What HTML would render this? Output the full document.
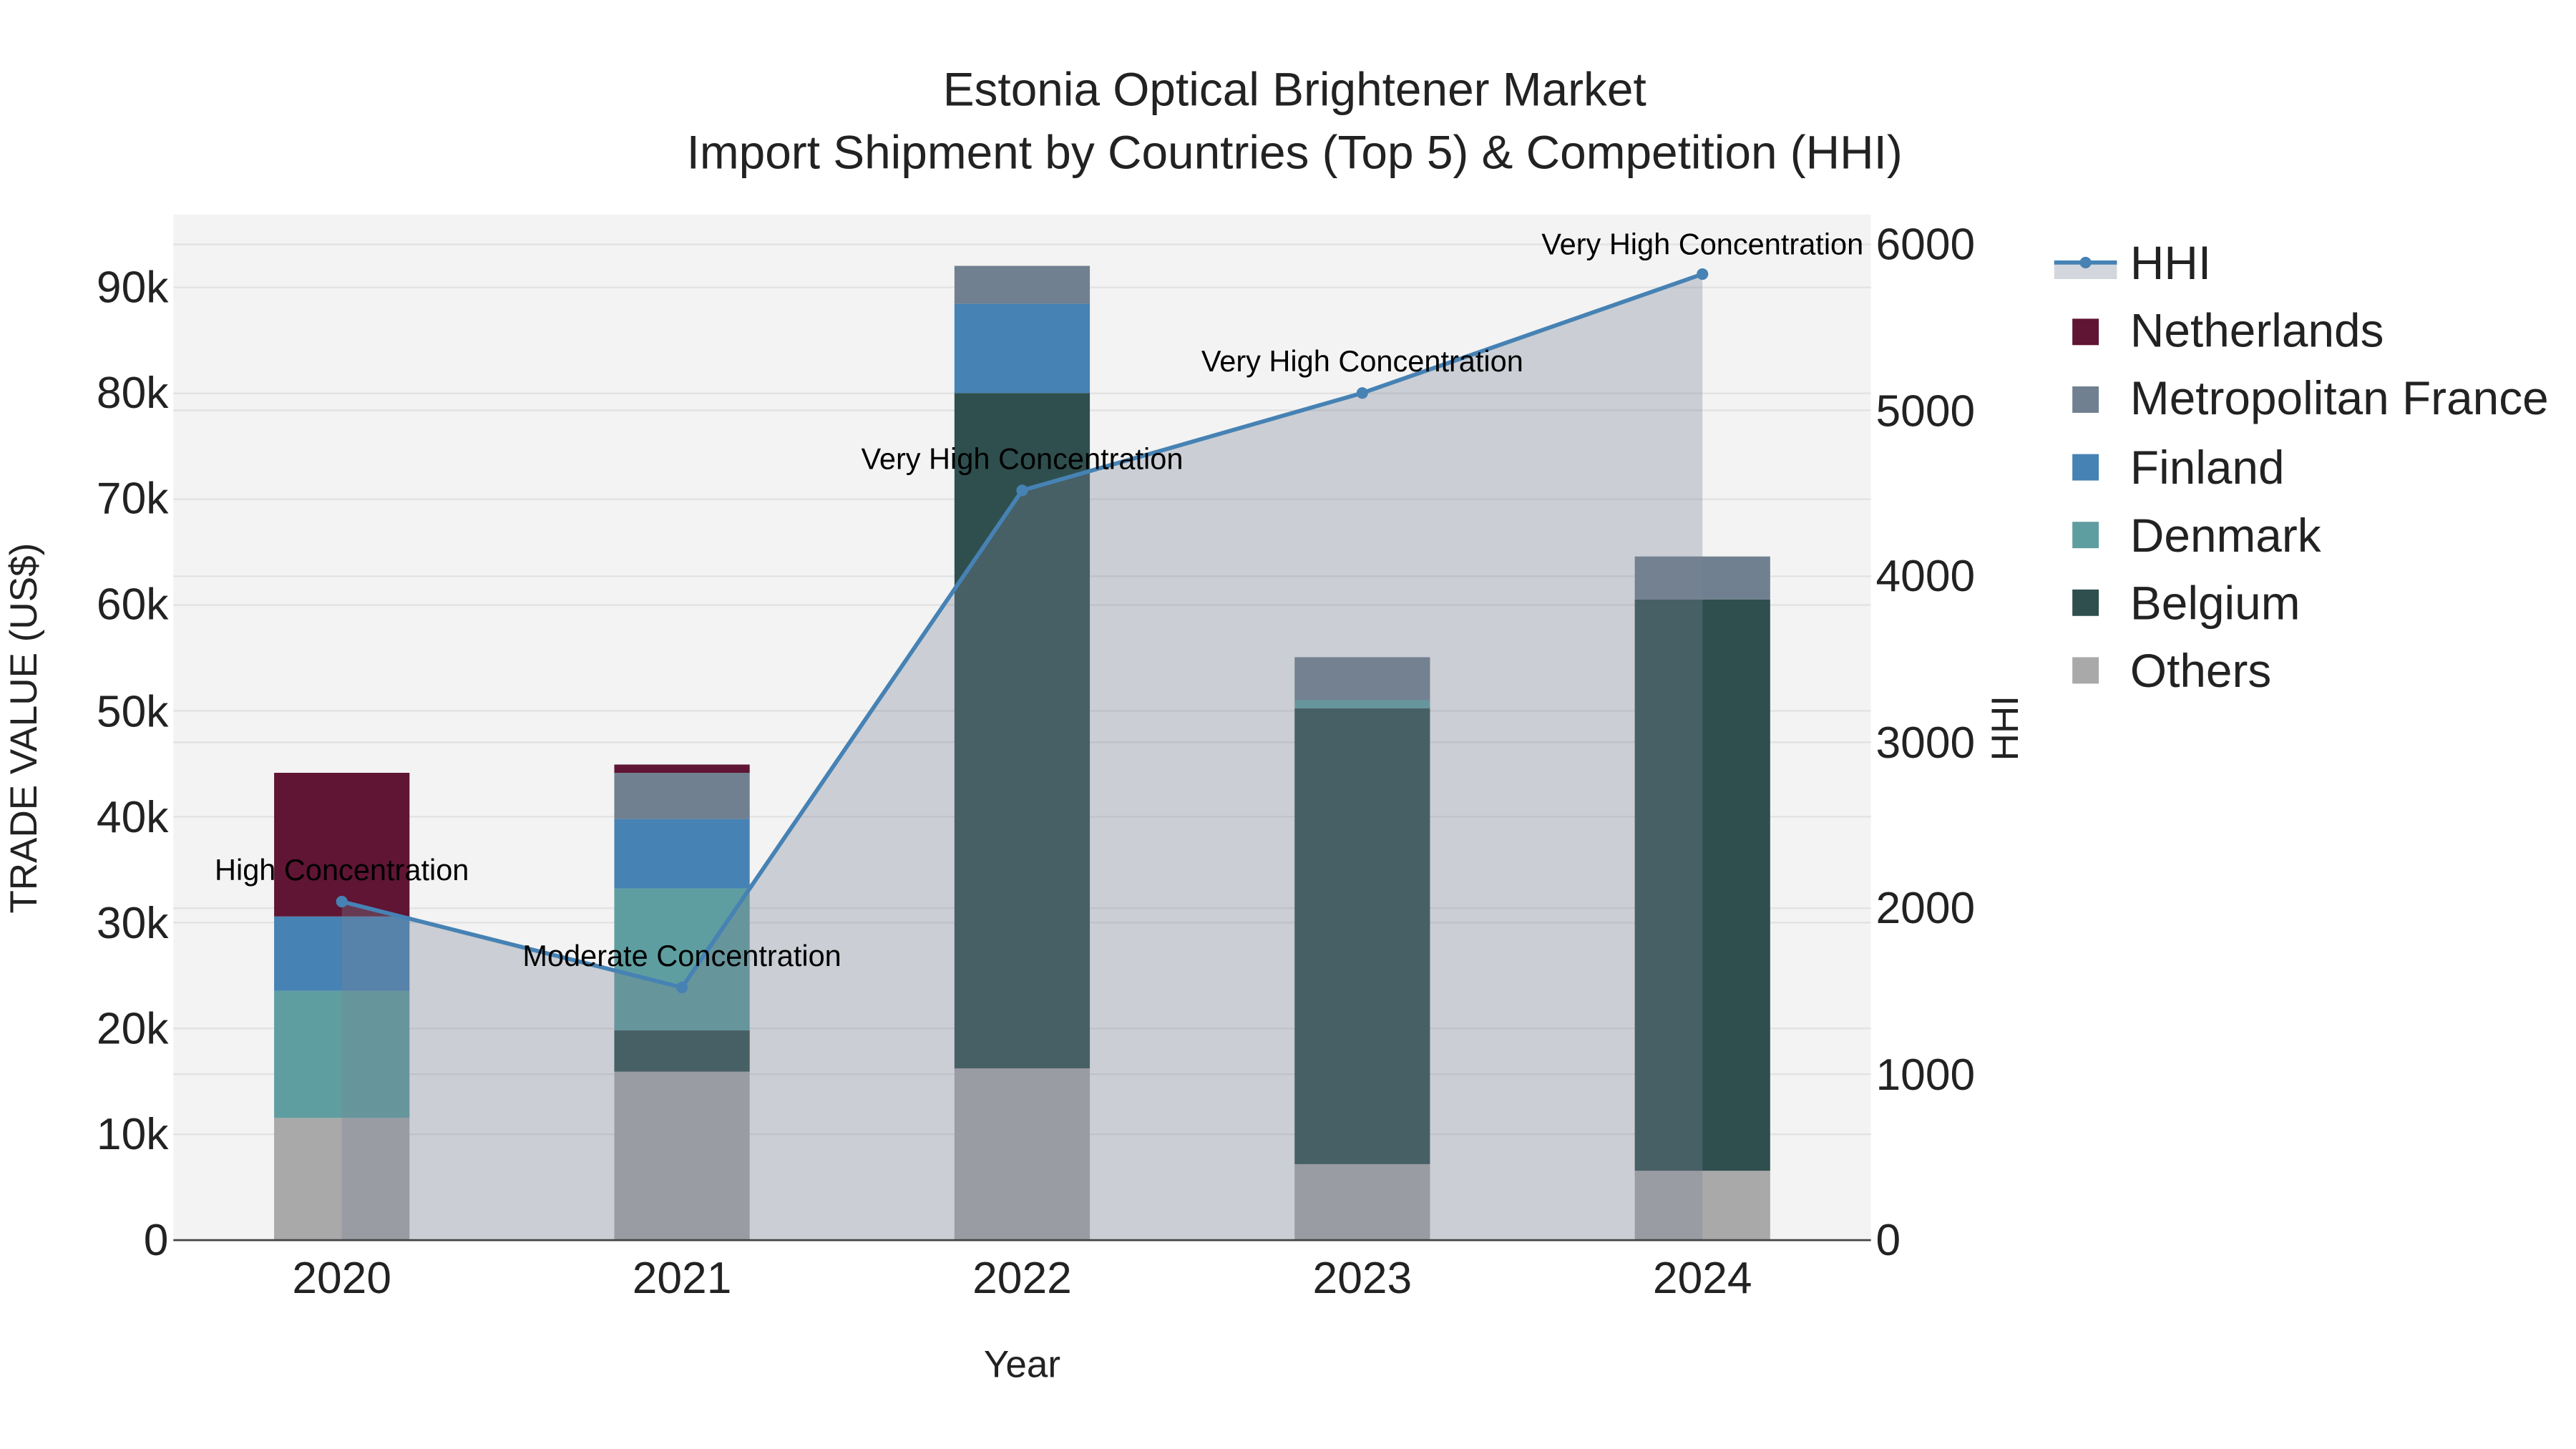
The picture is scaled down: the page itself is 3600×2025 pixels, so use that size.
<!DOCTYPE html>
<html><head><meta charset="utf-8"><style>html,body{margin:0;padding:0;background:#fff}svg{display:block}</style></head><body>
<svg width="3600" height="2025" viewBox="0 0 1560 877.5" xmlns="http://www.w3.org/2000/svg" font-family="Liberation Sans, sans-serif">
<rect width="1560" height="877.5" fill="#fff"/>
<rect x="105" y="130" width="1028" height="621" fill="#f3f3f3"/>
<g stroke="#e2e2e2" stroke-width="1">
<line x1="105" x2="1133" y1="686.9" y2="686.9"/><line x1="105" x2="1133" y1="622.8" y2="622.8"/><line x1="105" x2="1133" y1="558.7" y2="558.7"/><line x1="105" x2="1133" y1="494.6" y2="494.6"/><line x1="105" x2="1133" y1="430.5" y2="430.5"/><line x1="105" x2="1133" y1="366.4" y2="366.4"/><line x1="105" x2="1133" y1="302.3" y2="302.3"/><line x1="105" x2="1133" y1="238.2" y2="238.2"/><line x1="105" x2="1133" y1="174.1" y2="174.1"/>
<line x1="105" x2="1133" y1="650.5" y2="650.5"/><line x1="105" x2="1133" y1="550" y2="550"/><line x1="105" x2="1133" y1="449.5" y2="449.5"/><line x1="105" x2="1133" y1="349" y2="349"/><line x1="105" x2="1133" y1="248.5" y2="248.5"/><line x1="105" x2="1133" y1="148" y2="148"/>
</g>
<rect x="166" y="677" width="82" height="74" fill="#a9a9a9"/>
<rect x="166" y="600" width="82" height="77" fill="#5f9ea0"/>
<rect x="166" y="555" width="82" height="45" fill="#4682b4"/>
<rect x="166" y="468" width="82" height="87" fill="#5f1533"/>
<rect x="372" y="649" width="82" height="102" fill="#a9a9a9"/>
<rect x="372" y="624" width="82" height="25" fill="#2f4f4f"/>
<rect x="372" y="538" width="82" height="86" fill="#5f9ea0"/>
<rect x="372" y="496" width="82" height="42" fill="#4682b4"/>
<rect x="372" y="468" width="82" height="28" fill="#708090"/>
<rect x="372" y="463" width="82" height="5" fill="#5f1533"/>
<rect x="578" y="647" width="82" height="104" fill="#a9a9a9"/>
<rect x="578" y="238" width="82" height="409" fill="#2f4f4f"/>
<rect x="578" y="184" width="82" height="54" fill="#4682b4"/>
<rect x="578" y="161" width="82" height="23" fill="#708090"/>
<rect x="784" y="705" width="82" height="46" fill="#a9a9a9"/>
<rect x="784" y="429" width="82" height="276" fill="#2f4f4f"/>
<rect x="784" y="424" width="82" height="5" fill="#5f9ea0"/>
<rect x="784" y="398" width="82" height="26" fill="#708090"/>
<rect x="990" y="709" width="82" height="42" fill="#a9a9a9"/>
<rect x="990" y="363" width="82" height="346" fill="#2f4f4f"/>
<rect x="990" y="337" width="82" height="26" fill="#708090"/>
<polygon points="207,751 207,546 413,598 619,297 825,238 1031,166 1031,751" fill="rgba(120,130,150,0.33)"/>
<polyline points="207,546 413,598 619,297 825,238 1031,166" fill="none" stroke="#4682b4" stroke-width="2.5"/>
<g fill="#4682b4"><circle cx="207" cy="546" r="3.5"/><circle cx="413" cy="598" r="3.5"/><circle cx="619" cy="297" r="3.5"/><circle cx="825" cy="238" r="3.5"/><circle cx="1031" cy="166" r="3.5"/></g>
<line x1="105" x2="1133" y1="751" y2="751" stroke="#444" stroke-width="1.2"/>
<g font-size="18" text-anchor="middle" fill="#000">
<text x="207" y="533">High Concentration</text>
<text x="413" y="585">Moderate Concentration</text>
<text x="619" y="284">Very High Concentration</text>
<text x="825" y="225">Very High Concentration</text>
<text x="1031" y="154">Very High Concentration</text>
</g>
<g font-size="27" text-anchor="end" fill="#222">
<text x="102" y="760">0</text><text x="102" y="696">10k</text><text x="102" y="632">20k</text><text x="102" y="568">30k</text><text x="102" y="504">40k</text><text x="102" y="440">50k</text><text x="102" y="375">60k</text><text x="102" y="311">70k</text><text x="102" y="247">80k</text><text x="102" y="183">90k</text>
</g>
<g font-size="27" fill="#222">
<text x="1136" y="760">0</text><text x="1136" y="660">1000</text><text x="1136" y="559">2000</text><text x="1136" y="459">3000</text><text x="1136" y="358">4000</text><text x="1136" y="258">5000</text><text x="1136" y="157">6000</text>
</g>
<g font-size="27" text-anchor="middle" fill="#222">
<text x="207" y="783">2020</text><text x="413" y="783">2021</text><text x="619" y="783">2022</text><text x="825" y="783">2023</text><text x="1031" y="783">2024</text>
</g>
<text x="619" y="834" font-size="23" text-anchor="middle" fill="#222">Year</text>
<text transform="translate(22,441) rotate(-90)" font-size="23" text-anchor="middle" fill="#222">TRADE VALUE (US$)</text>
<text transform="translate(1222,441) rotate(-90)" font-size="23" text-anchor="middle" fill="#222">HHI</text>
<text x="784" y="64" font-size="28.5" text-anchor="middle" fill="#222">Estonia Optical Brightener Market</text>
<text x="784" y="102" font-size="28.5" text-anchor="middle" fill="#222">Import Shipment by Countries (Top 5) &amp; Competition (HHI)</text>
<rect x="1244" y="159" width="38" height="10" fill="rgba(120,130,150,0.33)"/>
<line x1="1244" x2="1282" y1="159" y2="159" stroke="#4682b4" stroke-width="2.5"/>
<circle cx="1263" cy="159" r="3.5" fill="#4682b4"/>
<rect x="1255" y="193" width="16" height="16" fill="#5f1533"/>
<rect x="1255" y="234" width="16" height="16" fill="#708090"/>
<rect x="1255" y="275" width="16" height="16" fill="#4682b4"/>
<rect x="1255" y="316" width="16" height="16" fill="#5f9ea0"/>
<rect x="1255" y="357" width="16" height="16" fill="#2f4f4f"/>
<rect x="1255" y="398" width="16" height="16" fill="#a9a9a9"/>
<g font-size="28.5" fill="#222">
<text x="1290" y="169">HHI</text>
<text x="1290" y="210">Netherlands</text>
<text x="1290" y="251">Metropolitan France</text>
<text x="1290" y="293">Finland</text>
<text x="1290" y="334">Denmark</text>
<text x="1290" y="375">Belgium</text>
<text x="1290" y="416">Others</text>
</g>
</svg>
</body></html>
